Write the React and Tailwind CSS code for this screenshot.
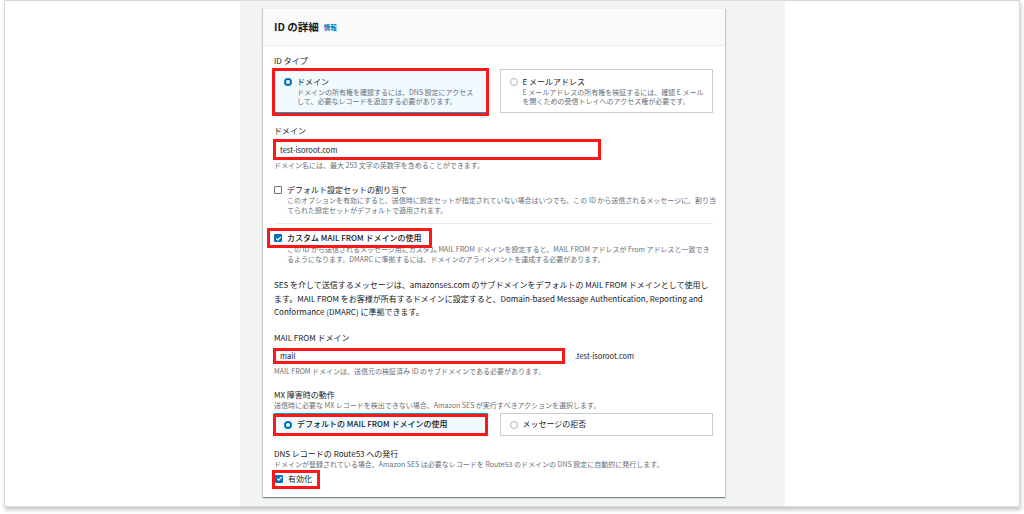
import React from 'react';

const RED = 'pointer-events-none absolute border-[3px] border-[#ff1616]';

const Radio = ({ on }) =>
  on ? (
    <span className="mt-[2px] box-border block h-[8px] w-[8px] shrink-0 rounded-full border-[2.5px] border-[#0073bb] bg-white" />
  ) : (
    <span className="mt-[2px] box-border block h-[8px] w-[8px] shrink-0 rounded-full border border-[#aab7b8] bg-white" />
  );

const Check = ({ on }) =>
  on ? (
    <span className="box-border flex h-[8px] w-[8px] shrink-0 items-center justify-center rounded-[1px] bg-[#0073bb]">
      <svg width="7" height="7" viewBox="0 0 8 8">
        <path d="M1.4 4.1 3.2 5.9 6.6 2.2" fill="none" stroke="#fff" strokeWidth="1.4" />
      </svg>
    </span>
  ) : (
    <span className="box-border block h-[8px] w-[8px] shrink-0 rounded-[1px] border border-[#687078] bg-white" />
  );

const Label = ({ children, className = '' }) => (
  <div className={`h-[12px] text-[8px] leading-[12px] text-[#16191f] ${className}`}>{children}</div>
);

const Desc = ({ lines, className = '', lh = 'leading-[10px]' }) => (
  <div className={`text-[7px] ${lh} whitespace-nowrap text-[#687078] ${className}`}>
    {lines.map((l) => (
      <div key={l}>{l}</div>
    ))}
  </div>
);

export default function App() {
  return (
    <div className="h-[514px] w-[1024px] overflow-hidden bg-white font-['Noto_Sans_CJK_JP','Noto_Sans',sans-serif]">
      <div className="ml-[4px] flex h-[507px] w-[1016px] border border-[#dadada] shadow-[1px_3px_4px_rgba(0,0,0,0.22)]">
        <div className="w-[235px] bg-white" />
        <div className="w-[545px] bg-[#f2f3f3] pl-[23px] pr-[60px] pt-[7px]">
          <div className="h-[489px] border-t border-[#eaeded] bg-white shadow-[0_1px_1px_rgba(0,28,36,0.3),1px_1px_1px_rgba(0,28,36,0.15),-1px_1px_1px_rgba(0,28,36,0.15)]">
            {/* header */}
            <div className="flex h-[37px] items-center gap-[5px] border-b border-[#eaeded] bg-[#fafafa] px-[11px]">
              <span className="text-[10.5px] font-bold text-[#16191f]">ID の詳細</span>
              <span className="mt-[1px] text-[6.5px] font-bold text-[#0073bb]">情報</span>
            </div>

            <div className="pl-[11px] pr-[12px]">
              <Label className="mt-[9px]">ID タイプ</Label>
              <div className="mt-[2px] grid grid-cols-2 gap-[12px]">
                <div className="relative h-[44px] border border-[#00a1c9] bg-[#f1faff] pl-[9px] pt-[6px]">
                  <div className="flex gap-[5px]">
                    <Radio on />
                    <div>
                      <div className="text-[8px] leading-[12px] text-[#16191f]">ドメイン</div>
                      <Desc
                        lh="leading-[9px]"
                        lines={['ドメインの所有権を確認するには、DNS 設定にアクセス', 'して、必要なレコードを追加する必要があります。']}
                      />
                    </div>
                  </div>
                  <span className={`${RED} -left-[3px] -right-[2px] -top-[2px] -bottom-[4px]`} />
                </div>
                <div className="h-[44px] border border-[#c6cfd0] bg-white pl-[9px] pt-[6px]">
                  <div className="flex gap-[5px]">
                    <Radio />
                    <div>
                      <div className="text-[8px] leading-[12px] text-[#16191f]">E メールアドレス</div>
                      <Desc
                        lh="leading-[9px]"
                        lines={['E メールアドレスの所有権を検証するには、確認 E メール', 'を開くための受信トレイへのアクセス権が必要です。']}
                      />
                    </div>
                  </div>
                </div>
              </div>

              <Label className="mt-[12px]">ドメイン</Label>
              <div className="relative mt-[2px] flex h-[21px] w-[327px] items-center border border-[#aab7b8] pl-[5px] text-[7.5px] text-[#16191f]">
                test-isoroot.com
                <span className={`${RED} -left-[2px] -right-[1px] -top-[1px] -bottom-[1px]`} />
              </div>
              <Desc lines={['ドメイン名には、最大 253 文字の英数字を含めることができます。']} />

              <div className="mt-[14px] flex h-[11px] items-center gap-[5px]">
                <Check />
                <span className="text-[8px] text-[#16191f]">デフォルト設定セットの割り当て</span>
              </div>
              <Desc
                className="pl-[13px]"
                lines={[
                  'このオプションを有効にすると、送信時に設定セットが指定されていない場合はいつでも、この ID から送信されるメッセージに、割り当',
                  'てられた設定セットがデフォルトで適用されます。',
                ]}
              />

              <div className="mt-[8px] h-px bg-[#eaeded]" />

              <div className="relative mt-[8px] flex h-[12px] w-[158px] items-center gap-[5px]">
                <Check on />
                <span className="text-[8px] font-medium text-[#16191f]">カスタム MAIL FROM ドメインの使用</span>
                <span className={`${RED} -left-[7px] -right-[0px] -top-[4px] -bottom-[4px]`} />
              </div>
              <Desc
                className="mt-[1px] pl-[13px]"
                lh="leading-[9.5px]"
                lines={[
                  'この ID から送信されるメッセージ用にカスタム MAIL FROM ドメインを設定すると、MAIL FROM アドレスが From アドレスと一致でき',
                  'るようになります。DMARC に準拠するには、ドメインのアラインメントを達成する必要があります。',
                ]}
              />

              <div className="mt-[14px] whitespace-nowrap text-[8px] leading-[13.5px] text-[#16191f]">
                <div>SES を介して送信するメッセージは、amazonses.com のサブドメインをデフォルトの MAIL FROM ドメインとして使用し</div>
                <div>ます。MAIL FROM をお客様が所有するドメインに設定すると、Domain-based Message Authentication, Reporting and</div>
                <div>Conformance (DMARC) に準拠できます。</div>
              </div>

              <Label className="mt-[13px]">MAIL FROM ドメイン</Label>
              <div className="mt-[4px] flex items-center gap-[10px]">
                <div className="relative flex h-[16px] w-[291px] items-center border border-[#aab7b8] pl-[5px] text-[7.5px] text-[#16191f]">
                  mail
                  <span className={`${RED} -left-[2px] -right-[1px] -top-[1px] -bottom-[1px]`} />
                </div>
                <span className="text-[7.5px] text-[#16191f]">.test-isoroot.com</span>
              </div>
              <Desc className="mt-[2px]" lines={['MAIL FROM ドメインは、送信元の検証済み ID のサブドメインである必要があります。']} />

              <Label className="mt-[13px]">MX 障害時の動作</Label>
              <Desc lh="leading-[8px]" lines={['送信時に必要な MX レコードを検出できない場合、Amazon SES が実行すべきアクションを選択します。']} />
              <div className="mt-[4px] grid grid-cols-2 gap-[12px]">
                <div className="relative flex h-[23px] items-center gap-[5px] border border-[#00a1c9] bg-[#f1faff] pl-[9px]">
                  <Radio on />
                  <span className="text-[8px] font-medium text-[#16191f]">デフォルトの MAIL FROM ドメインの使用</span>
                  <span className={`${RED} -left-[2px] -right-[1px] -top-[0px] -bottom-[1px]`} />
                </div>
                <div className="flex h-[23px] items-center gap-[5px] border border-[#c6cfd0] bg-white pl-[9px]">
                  <Radio />
                  <span className="text-[8px] text-[#16191f]">メッセージの拒否</span>
                </div>
              </div>

              <Label className="mt-[12px]">DNS レコードの Route53 への発行</Label>
              <Desc
                lh="leading-[8px]"
                lines={['ドメインが登録されている場合、Amazon SES は必要なレコードを Route53 のドメインの DNS 設定に自動的に発行します。']}
              />
              <div className="relative mt-[5px] flex h-[12px] w-[40px] items-center gap-[5px] pl-[1px]">
                <Check on />
                <span className="text-[8px] text-[#16191f]">有効化</span>
                <span className={`${RED} -left-[2px] -right-[6px] -top-[3px] -bottom-[4px]`} />
              </div>
            </div>
          </div>
        </div>
        <div className="flex-1 bg-white" />
      </div>
    </div>
  );
}
